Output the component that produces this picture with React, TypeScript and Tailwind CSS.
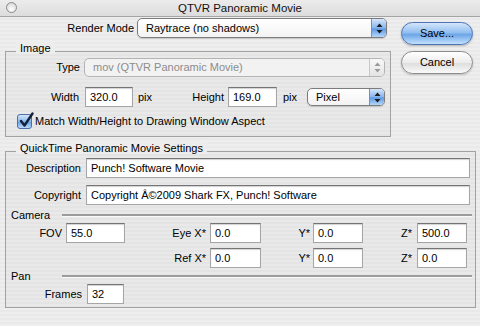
import React from 'react';

const Arrows = ({ color }: { color: string }) => (
  <svg width="7" height="11" viewBox="0 0 7 11">
    <polygon points="3.5,0.5 6.5,4 0.5,4" fill={color} />
    <polygon points="3.5,10.5 6.5,7 0.5,7" fill={color} />
  </svg>
);

interface PopupProps {
  text: string;
  className: string;
  disabled?: boolean;
}

const Popup = ({ text, className, disabled }: PopupProps) => (
  <div
    className={`flex overflow-hidden rounded-[5px] border ${
      disabled
        ? 'border-[#b4b4b4] bg-[#f2f2f2] text-[#8c8c8c]'
        : 'border-[#7c7c7c] bg-[linear-gradient(#ffffff,#f3f3f3)] text-black shadow-[0_1px_1px_rgba(0,0,0,0.15)]'
    } ${className}`}
  >
    <div className="flex flex-1 items-center pl-[8px]">{text}</div>
    <div
      className={`flex w-[15px] items-center justify-center border-l ${
        disabled
          ? 'border-[#c8c8c8] bg-[linear-gradient(#f8f8f8,#e4e4e4)]'
          : 'border-[#6f8fc2] bg-[linear-gradient(#d6e6fa,#86b4ec_50%,#5d97e2_55%,#b6d6fa)]'
      }`}
    >
      <Arrows color={disabled ? '#9a9a9a' : '#1b1b1b'} />
    </div>
  </div>
);

const Field = ({ value, className }: { value: string; className: string }) => (
  <input
    readOnly
    value={value}
    className={`h-[20px] border border-[#a6a6a6] border-t-[#747474] bg-white pl-[4px] text-[11px] text-black shadow-[inset_0_1px_1px_rgba(0,0,0,0.18)] outline-none ${className}`}
  />
);

const GroupTitle = ({ text }: { text: string }) => (
  <span className="absolute -top-[10px] left-[10px] bg-[#ededed] px-[4px] leading-[12px]">{text}</span>
);

const Separator = ({ label }: { label: string }) => (
  <div className="flex h-[12px] items-center pl-[5px] pr-[3px]">
    <span className="w-[51px] leading-[12px]">{label}</span>
    <div className="h-[2px] flex-1 bg-[#9c9c9c] shadow-[0_1px_0_#fafafa]" />
  </div>
);

export default function App() {
  return (
    <div className="h-[326px] w-[480px] overflow-hidden bg-[image:repeating-linear-gradient(to_bottom,#eeeeee_0px,#eeeeee_2px,#e9e9e9_2px,#e9e9e9_4px)] font-['Liberation_Sans',Arial,sans-serif] text-[11px] text-black">
      {/* title bar */}
      <div className="relative flex h-[17px] items-center justify-center border-b border-[#a4a4a4] bg-[linear-gradient(#ececec,#dcdcdc)]">
        <div className="absolute left-[6px] top-[2px] h-[11px] w-[11px] rounded-full border border-[#8a8a8a] bg-[radial-gradient(circle_at_50%_70%,#ffffff,#cfcfcf)]" />
        <span className="text-[11.5px] leading-[14px] text-[#111]">QTVR Panoramic Movie</span>
      </div>

      <div className="flex">
        <div className="w-[391px]">
          <div className="mt-[1px] flex h-[20px] items-center">
            <span className="w-[134px] text-right">Render Mode</span>
            <Popup text="Raytrace (no shadows)" className="ml-[3px] h-[20px] w-[250px]" />
          </div>

          <div className="relative ml-[5px] mt-[13px] h-[86px] w-[386px] border border-[#a2a2a2] bg-black/[0.02]">
            <GroupTitle text="Image" />
            <div className="mt-[6px] flex h-[19px] items-center">
              <span className="w-[74px] text-right">Type</span>
              <Popup text="mov (QTVR Panoramic Movie)" disabled className="ml-[4px] h-[19px] w-[301px]" />
            </div>
            <div className="mt-[10px] flex h-[20px] items-center">
              <span className="w-[73px] text-right">Width</span>
              <Field value="320.0" className="ml-[6px] w-[48px]" />
              <span className="ml-[5px] w-[54px]">pix</span>
              <span className="w-[32px] text-right">Height</span>
              <Field value="169.0" className="ml-[4px] w-[49px]" />
              <span className="ml-[6px] w-[24px]">pix</span>
              <Popup text="Pixel" className="h-[18px] w-[78px]" />
            </div>
            <div className="mt-[6px] flex items-center">
              <div className="relative ml-[11px] h-[15px] w-[15px] rounded-[3px] border border-[#4d6fa8] bg-[linear-gradient(#d2e4fa,#8ab8ee_50%,#6aa2e6_55%,#bcdafa)]">
                <svg className="absolute -top-[3px] left-[1px]" width="15" height="16" viewBox="0 0 15 16">
                  <path d="M2 9 L5.5 13.5 L13.5 1.5" stroke="#15213a" strokeWidth="2.4" fill="none" strokeLinecap="round" strokeLinejoin="round" />
                </svg>
              </div>
              <span className="ml-[3px]">Match Width/Height to Drawing Window Aspect</span>
            </div>
          </div>
        </div>

        <div className="ml-[10px] mt-[5px] flex flex-col gap-[6px]">
          <div className="flex h-[23px] w-[72px] items-center justify-center rounded-full border border-[#4f74b4] bg-[linear-gradient(#d4e6fb,#94bff0_45%,#6ea6e8_55%,#c2e0fc)] shadow-[0_1px_2px_rgba(0,0,0,0.25)]">
            Save...
          </div>
          <div className="flex h-[23px] w-[72px] items-center justify-center rounded-full border border-[#8c8c8c] bg-[linear-gradient(#ffffff,#ececec_50%,#dedede_55%,#fafafa)] shadow-[0_1px_2px_rgba(0,0,0,0.2)]">
            Cancel
          </div>
        </div>
      </div>

      <div className="relative ml-[5px] mt-[14px] h-[157px] w-[471px] border border-[#a2a2a2] bg-black/[0.02]">
        <GroupTitle text="QuickTime Panoramic Movie Settings" />
        <div className="mt-[6px] flex h-[20px] items-center">
          <span className="w-[75px] text-right">Description</span>
          <Field value="Punch! Software Movie" className="ml-[5px] w-[384px]" />
        </div>
        <div className="mt-[7px] flex h-[20px] items-center">
          <span className="w-[75px] text-right">Copyright</span>
          <Field value="Copyright Â©2009 Shark FX, Punch! Software" className="ml-[5px] w-[384px]" />
        </div>

        <div className="mt-[4px]">
          <Separator label="Camera" />
        </div>
        <div className="mt-[2px] flex h-[20px] items-center">
          <span className="w-[56px] text-right">FOV</span>
          <Field value="55.0" className="ml-[4px] w-[59px]" />
          <span className="w-[81px] text-right">Eye X*</span>
          <Field value="0.0" className="ml-[4px] w-[51px]" />
          <span className="w-[49px] text-right">Y*</span>
          <Field value="0.0" className="ml-[3px] w-[50px]" />
          <span className="w-[49px] text-right">Z*</span>
          <Field value="500.0" className="ml-[5px] w-[50px]" />
        </div>
        <div className="mt-[5px] flex h-[20px] items-center">
          <span className="w-[119px]" />
          <span className="w-[81px] text-right">Ref X*</span>
          <Field value="0.0" className="ml-[4px] w-[51px]" />
          <span className="w-[49px] text-right">Y*</span>
          <Field value="0.0" className="ml-[3px] w-[50px]" />
          <span className="w-[49px] text-right">Z*</span>
          <Field value="0.0" className="ml-[5px] w-[50px]" />
        </div>

        <div className="mt-[2px]">
          <Separator label="Pan" />
        </div>
        <div className="mt-[2px] flex h-[20px] items-center">
          <span className="w-[76px] text-right">Frames</span>
          <Field value="32" className="ml-[5px] w-[37px]" />
        </div>
      </div>
    </div>
  );
}
